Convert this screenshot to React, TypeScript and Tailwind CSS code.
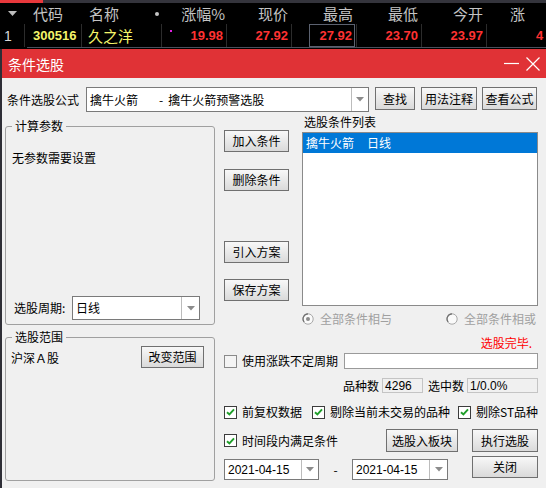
import React from "react";

const F = "font-['Microsoft_YaHei','Noto_Sans_CJK_SC',sans-serif]";

function Btn({ children, className = "" }: { children: React.ReactNode; className?: string }) {
  return (
    <div
      className={`flex items-center justify-center border border-[#707070] bg-linear-to-b from-[#f8f8f8] to-[#dadada] text-[12px] leading-none text-black shrink-0 ${className}`}
    >
      {children}
    </div>
  );
}

function Arrow() {
  return (
    <svg width="8" height="5" viewBox="0 0 8 5">
      <path d="M0 0 L8 0 L4 4.5 Z" fill="#8c8c8c" />
    </svg>
  );
}

function Combo({
  children,
  className = "",
  arrowW = "w-[17px]",
  textCls = "",
}: {
  children: React.ReactNode;
  className?: string;
  arrowW?: string;
  textCls?: string;
}) {
  return (
    <div className={`flex border border-[#7a7a7a] bg-white shrink-0 ${className}`}>
      <div className={`flex-1 flex items-center pl-[3px] text-[12px] text-black whitespace-nowrap overflow-hidden ${textCls}`}>
        {children}
      </div>
      <div className={`${arrowW} border-l border-[#bcbcbc] flex items-center justify-center`}>
        <Arrow />
      </div>
    </div>
  );
}

function Check({ checked }: { checked: boolean }) {
  return (
    <div
      className={`w-[13px] h-[13px] border flex items-center justify-center shrink-0 ${
        checked ? "border-[#3c3c3c] bg-white" : "border-[#8a8a8a] bg-[#f4f4f4]"
      }`}
    >
      {checked && (
        <svg width="9" height="8" viewBox="0 0 9 8">
          <path d="M1 4.2 L3.4 6.5 L8 1.3" stroke="#1f9e2a" strokeWidth="1.9" fill="none" />
        </svg>
      )}
    </div>
  );
}

function Radio({ checked }: { checked: boolean }) {
  return (
    <svg width="12" height="12" viewBox="0 0 12 12" className="shrink-0">
      <circle cx="6" cy="6" r="5.2" fill="#fafafa" stroke="#a8a8a8" strokeWidth="1" />
      <path d="M2.2 9 A5 5 0 0 1 6 0.9" stroke="#707070" strokeWidth="1.2" fill="none" />
      {checked && <circle cx="6" cy="6" r="2" fill="#8a8a8a" />}
    </svg>
  );
}

export default function App() {
  return (
    <div className={`w-[546px] h-[488px] overflow-hidden bg-black ${F}`}>
      {/* market list strip */}
      <div className="h-[49px] bg-black">
        <div className="flex h-[3px]">
          <div className="w-[43px] bg-[#e8383c]" />
          <div className="flex-1 bg-[#34343c]" />
        </div>
        <div className="flex h-[21px] items-center text-[15px] text-[#c4c4c4] leading-none">
          <div className="w-[25px] flex justify-center">
            <svg width="9" height="5" viewBox="0 0 9 5">
              <path d="M0 0 L9 0 L4.5 5 Z" fill="#bdbdbd" />
            </svg>
          </div>
          <div className="w-[57px] pl-[8px]">代码</div>
          <div className="w-[80px] pl-[7px] flex items-center">
            <span>名称</span>
            <span className="ml-auto mr-[3px] w-[4px] h-[4px] rounded-full bg-[#c4c4c4]" />
          </div>
          <div className="w-[65px] text-right pr-[2px]">涨幅%</div>
          <div className="w-[65px] text-right pr-[4px]">现价</div>
          <div className="w-[65px] text-right pr-[4px]">最高</div>
          <div className="w-[65px] text-right pr-[4px]">最低</div>
          <div className="w-[65px] text-right pr-[4px]">今开</div>
          <div className="flex-1 pl-[23px] whitespace-nowrap">涨</div>
        </div>
        <div className="flex h-[23px] items-center font-['Liberation_Sans',sans-serif] font-bold text-[13px] leading-none text-[#ff3232]">
          <div className="w-[25px] h-full border-r border-[#2c2c2c] flex items-center pl-[4px] text-[#d8d8d8] font-normal text-[14px]">
            1
          </div>
          <div className="w-[57px] h-full border-r border-[#2c2c2c] flex items-center pl-[8px] text-[#f4f46a]">
            300516
          </div>
          <div className={`w-[80px] h-full border-r border-[#2c2c2c] flex items-center pl-[6px] text-[#f4f46a] font-normal text-[15px] ${F}`}>
            久之洋
          </div>
          <div className="w-[65px] h-full border-r border-[#2c2c2c] flex items-center justify-between pr-[3px]">
            <span className="self-start mt-[6px] ml-[8px] w-[2px] h-[2px] bg-[#e020e0]" />
            <span>19.98</span>
          </div>
          <div className="w-[65px] h-full border-r border-[#2c2c2c] flex items-center justify-end pr-[3px]">27.92</div>
          <div className="w-[65px] h-full border-r border-[#2c2c2c] flex items-center justify-end pr-[1px]">
            <div className="h-[23px] w-[46px] border border-[#5c6270] flex items-center justify-end pr-[2px]">27.92</div>
          </div>
          <div className="w-[65px] h-full border-r border-[#2c2c2c] flex items-center justify-end pr-[3px]">23.70</div>
          <div className="w-[65px] h-full border-r border-[#2c2c2c] flex items-center justify-end pr-[3px]">23.97</div>
          <div className="flex-1 h-full flex items-center pl-[49px]">4</div>
        </div>
        <div className="flex h-[1px]">
          <div className="w-[27px]" />
          <div className="flex-1 bg-[#4a4f5c]" />
        </div>
      </div>

      {/* dialog */}
      <div className="border-l-2 border-[#2e2e36] h-[439px] flex flex-col">
        <div className="h-[29px] bg-[#e03236] flex items-center pl-[6px] pr-[6px] shrink-0">
          <span className="text-white text-[14px] leading-none">条件选股</span>
          <div className="ml-auto flex items-center">
            <svg width="15" height="3" viewBox="0 0 15 3">
              <line x1="0" y1="1.5" x2="15" y2="1.5" stroke="white" strokeWidth="1.2" />
            </svg>
            <svg width="14" height="14" viewBox="0 0 14 14" className="ml-[7px]">
              <path d="M0.5 0.5 L13.5 13.5 M13.5 0.5 L0.5 13.5" stroke="white" strokeWidth="1.2" />
            </svg>
          </div>
        </div>

        <div className="flex-1 bg-[#f0f0f0] pl-[3px] pr-[8px] pt-[9px] text-[12px] text-black leading-none">
          {/* row 1 */}
          <div className="flex items-start h-[25px]">
            <div className="w-[81px] h-[25px] pl-[2px] flex items-center">条件选股公式</div>
            <Combo className="w-[283px] h-[25px]">
              <span>擒牛火箭</span>
              <span className="ml-[21px]">-</span>
              <span className="ml-[5px]">擒牛火箭预警选股</span>
            </Combo>
            <Btn className="ml-[6px] w-[40px] h-[23px]">查找</Btn>
            <Btn className="ml-[6px] w-[56px] h-[23px]">用法注释</Btn>
            <Btn className="ml-[5px] w-[55px] h-[23px]">查看公式</Btn>
          </div>

          {/* main */}
          <div className="flex">
            {/* left column */}
            <div className="w-[210px] pt-[7px] flex flex-col shrink-0">
              <fieldset className="h-[206px] border border-[#a0a0a0] rounded-[3px] p-0 m-0">
                <legend className="ml-[6px] px-[3px] leading-[14px] text-[12px]">计算参数</legend>
                <div className="h-[191px] flex flex-col px-[6px]">
                  <div className="mt-[17px] leading-[16px]">无参数需要设置</div>
                  <div className="mt-auto mb-[4px] flex items-center h-[24px]">
                    <div className="w-[60px] pl-[2px]">选股周期:</div>
                    <Combo className="w-[128px] h-[24px]" arrowW="w-[18px]">
                      日线
                    </Combo>
                  </div>
                </div>
              </fieldset>
              <fieldset className="mt-[5px] h-[151px] border border-[#a0a0a0] rounded-[3px] p-0 m-0">
                <legend className="ml-[6px] px-[3px] leading-[14px] text-[12px]">选股范围</legend>
                <div className="pl-[5px] pr-[10px] pt-[2px] flex items-center justify-between">
                  <span className="mt-[2px]">沪深Ａ股</span>
                  <Btn className="w-[63px] h-[22px]">改变范围</Btn>
                </div>
              </fieldset>
            </div>

            {/* right column */}
            <div className="ml-[9px] flex-1 flex flex-col">
              <div className="flex">
                <div className="w-[65px] flex flex-col shrink-0">
                  <Btn className="mt-[18px] w-[65px] h-[22px]">加入条件</Btn>
                  <Btn className="mt-[17px] w-[65px] h-[22px]">删除条件</Btn>
                  <Btn className="mt-[50px] w-[65px] h-[22px]">引入方案</Btn>
                  <Btn className="mt-[16px] w-[65px] h-[22px]">保存方案</Btn>
                </div>
                <div className="ml-[13px] flex-1 flex flex-col">
                  <div className="mt-[3px] leading-[14px] pl-[2px]">选股条件列表</div>
                  <div className="mt-[3px] h-[174px] border border-[#8a8a8a] bg-white">
                    <div className="h-[20px] bg-[#0078d7] text-white flex items-center pl-[3px] mx-[0px]">
                      <span>擒牛火箭</span>
                      <span className="ml-[13px]">日线</span>
                    </div>
                  </div>
                  <div className="mt-[6px] h-[14px] flex items-center text-[#a0a0a0]">
                    <Radio checked />
                    <span className="ml-[6px]">全部条件相与</span>
                    <div className="ml-auto mr-[2px] flex items-center">
                      <Radio checked={false} />
                      <span className="ml-[6px]">全部条件相或</span>
                    </div>
                  </div>
                </div>
              </div>

              <div className="mt-[10px] leading-[14px] text-right pr-[6px] text-[#ff0000]">选股完毕.</div>

              <div className="mt-[3px] h-[16px] flex items-center">
                <Check checked={false} />
                <span className="ml-[5px]">使用涨跌不定周期</span>
                <div className="ml-auto w-[194px] h-[16px] border border-[#9a9a9a] bg-white" />
              </div>

              <div className="mt-[9px] h-[15px] flex items-center justify-end">
                <span>品种数</span>
                <div className="ml-[3px] w-[41px] h-[15px] border border-[#c4c4c4] flex items-center pl-[2px] font-['Liberation_Sans',sans-serif]">
                  4296
                </div>
                <span className="ml-[5px]">选中数</span>
                <div className="ml-[3px] w-[71px] h-[15px] border border-[#c4c4c4] flex items-center pl-[2px] font-['Liberation_Sans',sans-serif]">
                  1/0.0%
                </div>
              </div>

              <div className="mt-[11px] h-[16px] flex items-center">
                <div className="w-[88px] flex items-center">
                  <Check checked />
                  <span className="ml-[5px]">前复权数据</span>
                </div>
                <div className="w-[146px] flex items-center">
                  <Check checked />
                  <span className="ml-[5px]">剔除当前未交易的品种</span>
                </div>
                <div className="flex items-center">
                  <Check checked />
                  <span className="ml-[5px] whitespace-nowrap">剔除ST品种</span>
                </div>
              </div>

              <div className="mt-[9px] h-[23px] flex items-center">
                <div className="w-[162px] flex items-center">
                  <Check checked />
                  <span className="ml-[5px]">时间段内满足条件</span>
                </div>
                <Btn className="w-[72px] h-[23px]">选股入板块</Btn>
                <Btn className="ml-[14px] w-[66px] h-[23px]">执行选股</Btn>
              </div>

              <div className="mt-[4px] flex items-start">
                <Combo className="mt-[3px] w-[95px] h-[21px]" textCls="font-['Liberation_Sans',sans-serif]">
                  2021-04-15
                </Combo>
                <span className="mt-[8px] w-[33px] text-center">-</span>
                <Combo className="mt-[3px] w-[96px] h-[21px]" arrowW="w-[18px]" textCls="font-['Liberation_Sans',sans-serif]">
                  2021-04-15
                </Combo>
                <Btn className="ml-[24px] w-[66px] h-[22px]">关闭</Btn>
              </div>
            </div>
          </div>
        </div>
      </div>
    </div>
  );
}
